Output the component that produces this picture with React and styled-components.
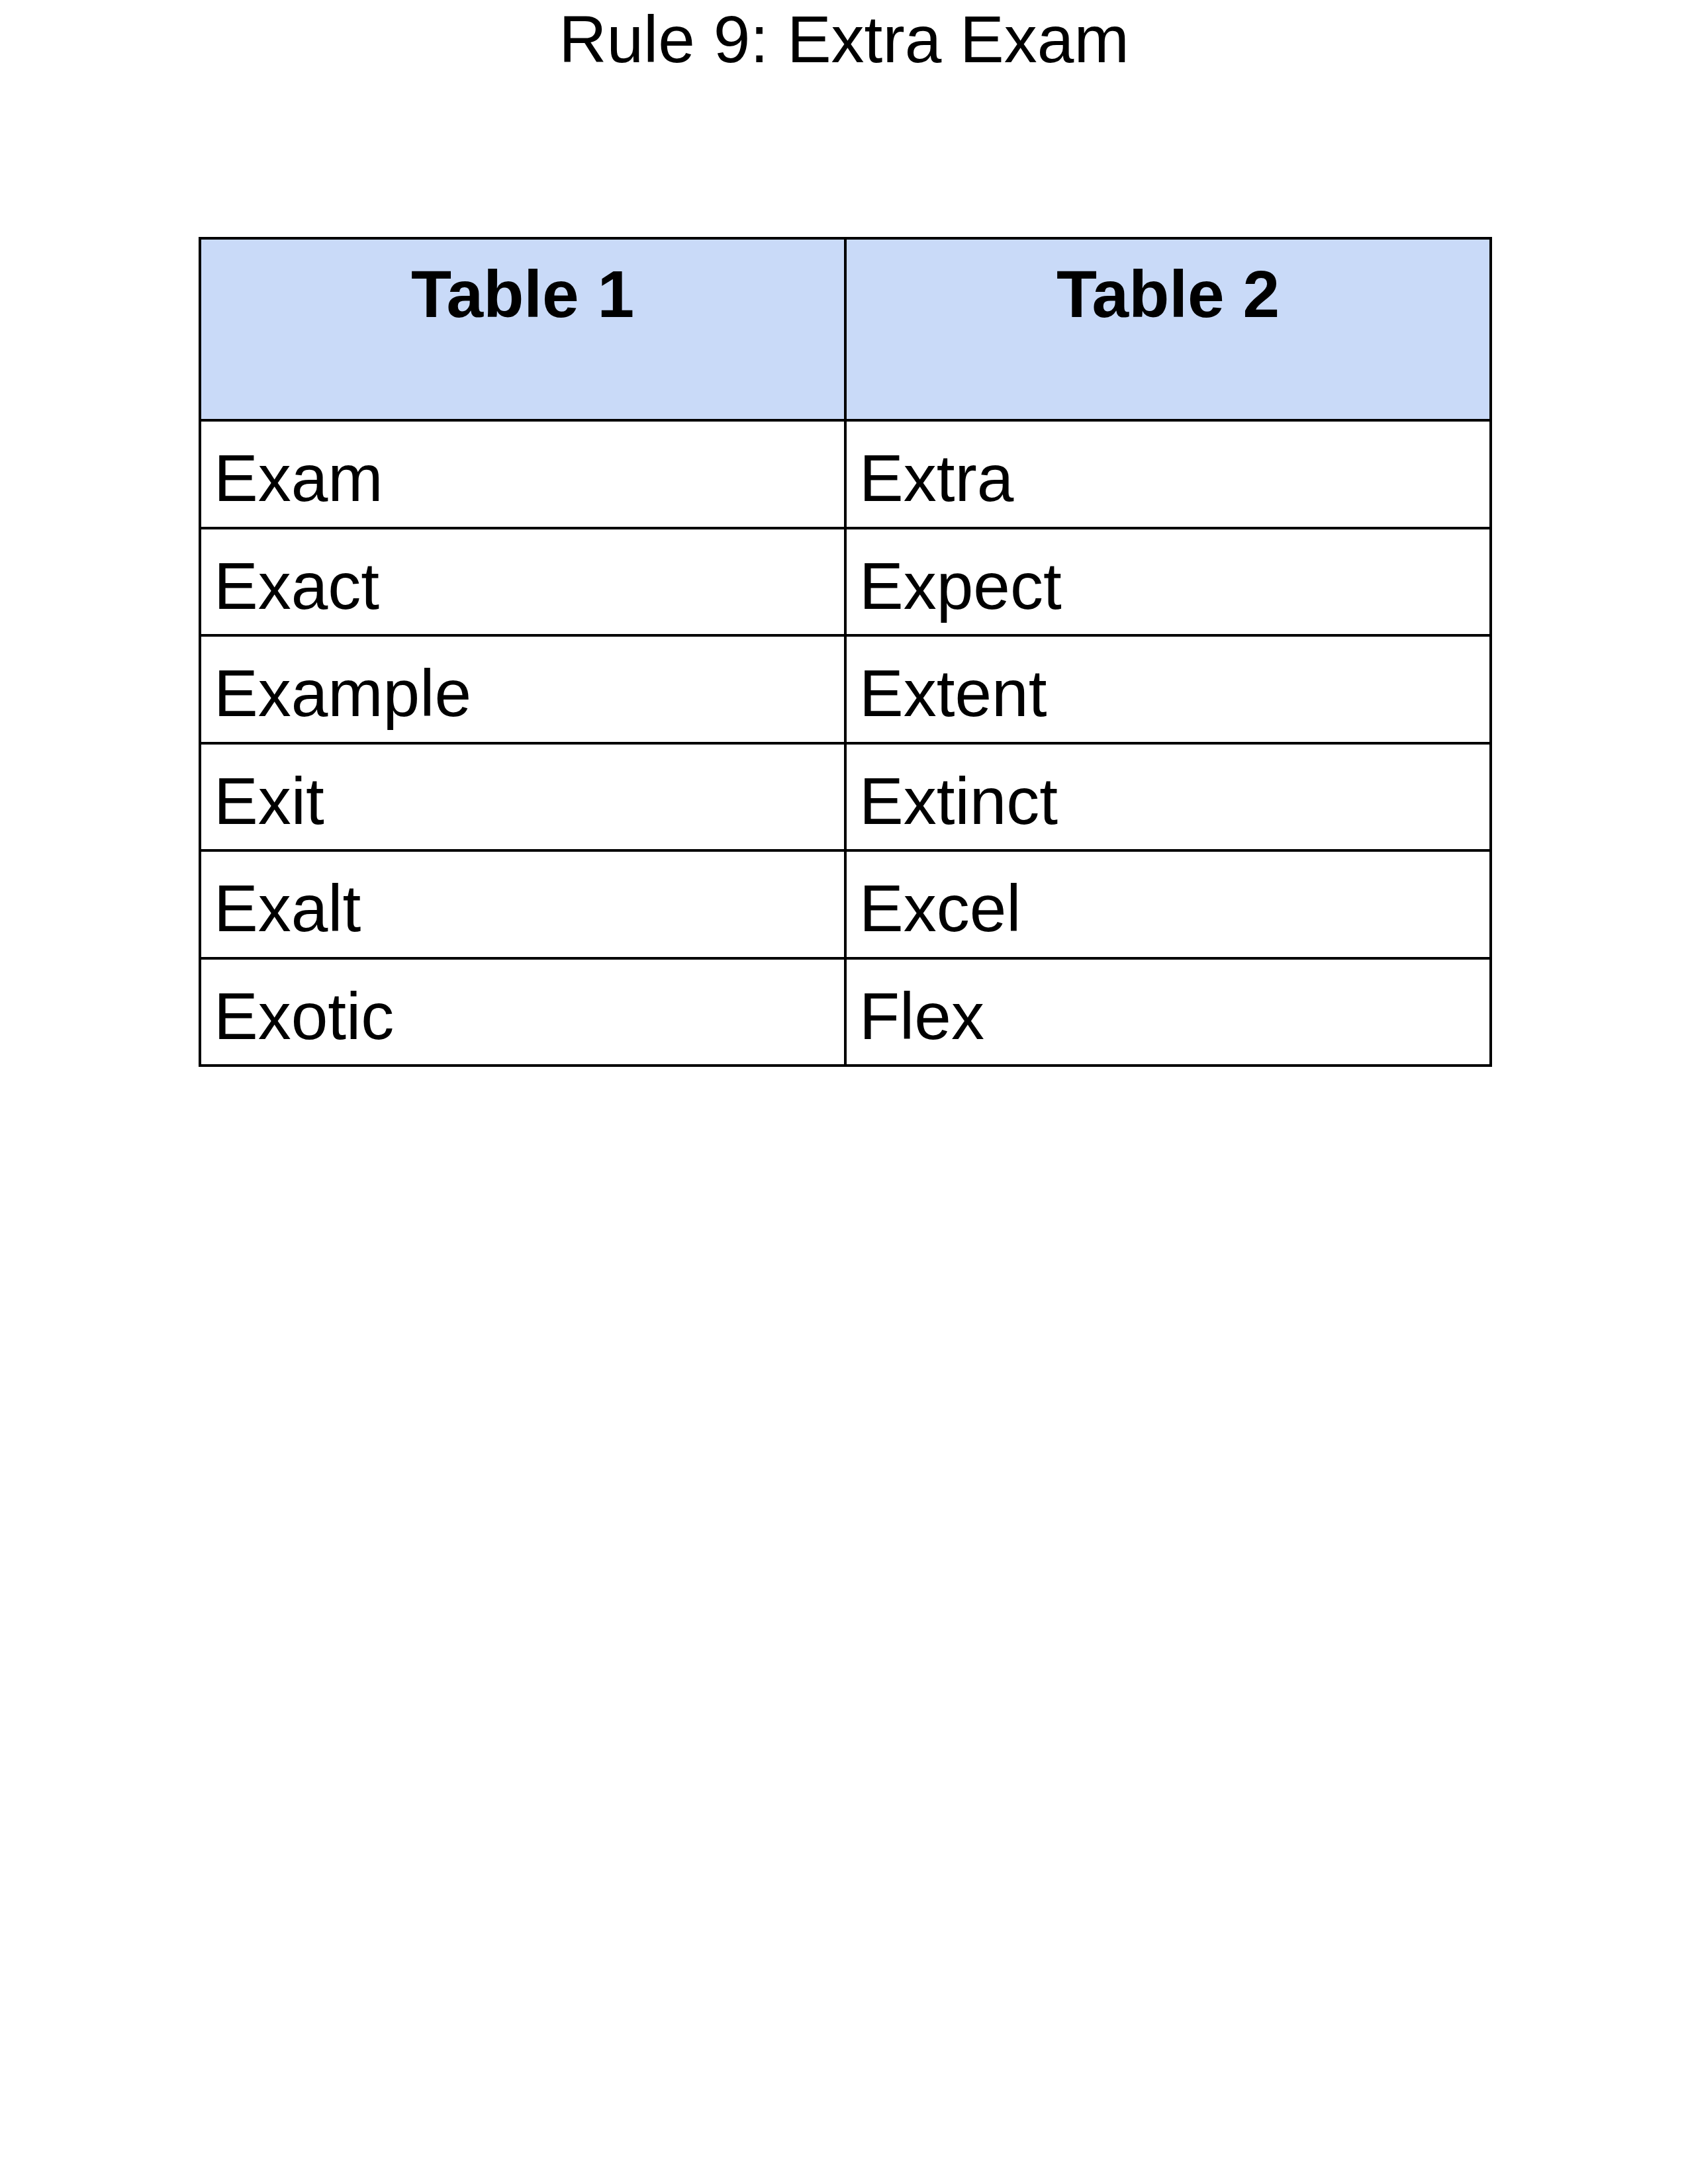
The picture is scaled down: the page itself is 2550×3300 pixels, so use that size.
import React from "react";
import styled, { createGlobalStyle } from "styled-components";

const GlobalStyle = createGlobalStyle`
  html, body {
    margin: 0;
    padding: 0;
    background: #ffffff;
  }
  body {
    font-family: "Liberation Sans", Arial, sans-serif;
    color: #000000;
  }
`;

const Page = styled.div`
  width: 2550px;
  min-height: 3300px;
  display: flex;
  flex-direction: column;
  align-items: center;
`;

const Title = styled.h1`
  margin: 9px 0 0;
  font-size: 100px;
  line-height: 100px;
  font-weight: 400;
  text-align: center;
`;

const Grid = styled.div`
  align-self: flex-start;
  margin: 249px 0 0 300px;
  width: 1954px;
  box-sizing: border-box;
  display: grid;
  grid-template-columns: 975px 975px;
  border-left: 4px solid #000;
  border-top: 4px solid #000;
`;

const Cell = styled.div`
  box-sizing: border-box;
  height: ${(p) => (p.$head ? "275px" : "162.5px")};
  padding: ${(p) => (p.$head ? "32px 19px 0" : "35px 19px 0")};
  border-right: 4px solid #000;
  border-bottom: 4px solid #000;
  background: ${(p) => (p.$head ? "#c9daf8" : "#ffffff")};
  font-size: 100px;
  line-height: 100px;
  font-weight: ${(p) => (p.$head ? 700 : 400)};
  text-align: ${(p) => (p.$head ? "center" : "left")};
  white-space: nowrap;
`;

const rows = [
  ["Exam", "Extra"],
  ["Exact", "Expect"],
  ["Example", "Extent"],
  ["Exit", "Extinct"],
  ["Exalt", "Excel"],
  ["Exotic", "Flex"],
];

const App = () => (
  <>
    <GlobalStyle />
    <Page>
      <Title>Rule 9: Extra Exam</Title>
      <Grid>
        <Cell $head>Table 1</Cell>
        <Cell $head>Table 2</Cell>
        {rows.map(([a, b]) => (
          <React.Fragment key={a}>
            <Cell>{a}</Cell>
            <Cell>{b}</Cell>
          </React.Fragment>
        ))}
      </Grid>
    </Page>
  </>
);

export default App;
